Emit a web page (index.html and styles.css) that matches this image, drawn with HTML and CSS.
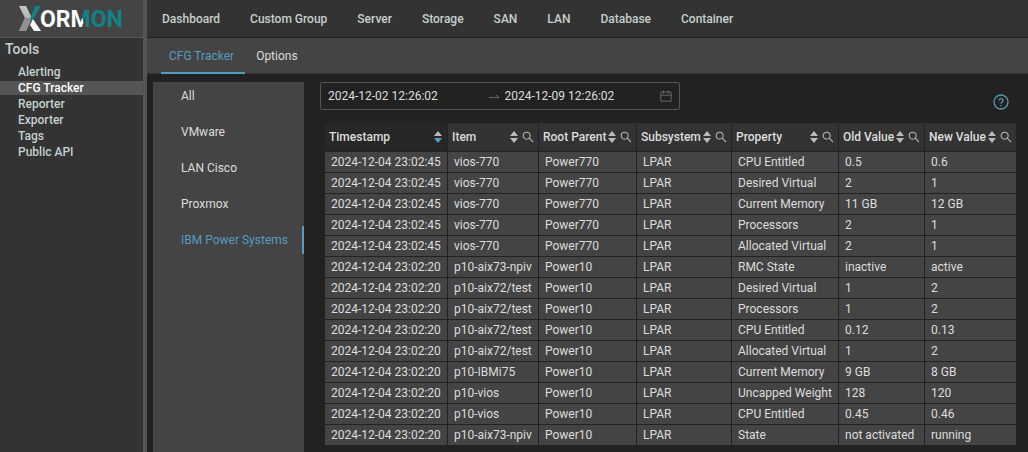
FILE: index.html
```html
<!DOCTYPE html>
<html lang="en">
<head>
<meta charset="utf-8">
<title>XORMON - CFG Tracker</title>
<link rel="stylesheet" href="styles.css">
</head>
<body>
<svg class="sprite" aria-hidden="true">
  <symbol id="sort" viewBox="0 0 8 12"><path class="sort-up" d="M4 0 8 5H0z"/><path class="sort-down" d="M4 12 0 7h8z"/></symbol>
  <symbol id="search" viewBox="64 64 896 896"><path d="M909.6 854.5L649.9 594.8C690.2 542.7 712 479 712 412c0-80.2-31.3-155.4-87.9-212.1-56.6-56.7-132-87.9-212.1-87.9s-155.5 31.3-212.1 87.9C143.2 256.5 112 331.8 112 412c0 80.1 31.3 155.5 87.9 212.1C256.5 680.8 331.8 712 412 712c67 0 130.6-21.8 182.7-62l259.7 259.6a8.2 8.2 0 0011.6 0l43.6-43.5a8.2 8.2 0 000-11.6zM570.4 570.4C528 612.7 471.8 636 412 636s-116-23.3-158.4-65.6C211.3 528 188 471.8 188 412s23.3-116.1 65.6-158.4C296 211.3 352.2 188 412 188s116.1 23.2 158.4 65.6S636 352.2 636 412s-23.3 116.1-65.6 158.4z"/></symbol>
</svg>
<div class="app">
  <aside class="sidebar">
    <a class="logo" href="#" aria-label="XORMON">
      <svg width="106" height="28" viewBox="0 0 106 28">
        <defs>
          <linearGradient id="word" gradientUnits="userSpaceOnUse" x1="60" y1="16" x2="68" y2="13">
            <stop offset=".58" stop-color="#fff"/><stop offset=".58" stop-color="#148087"/>
          </linearGradient>
          <linearGradient id="steel" x1="0" y1="0" x2="0" y2="1">
            <stop offset="0" stop-color="#c8c8c8"/><stop offset="1" stop-color="#999"/>
          </linearGradient>
        </defs>
        <path fill="url(#steel)" d="M1 1h7l6 12-6 13H1l6-13z"/>
        <path fill="#909090" d="M7 13h7L8 26H1z"/>
        <path fill="#148087" d="M17 1h6l-7 12-3 3-1-2z"/>
        <path fill="#fff" d="M15 14l8 12h-7l-4-6z"/>
        <text class="logo-word" x="22" y="22" fill="url(#word)">ORMON</text>
      </svg>
    </a>
    <nav class="tools">
      <h2 class="tools-title">Tools</h2>
      <a href="#">Alerting</a>
      <a href="#" class="current">CFG Tracker</a>
      <a href="#">Reporter</a>
      <a href="#">Exporter</a>
      <a href="#">Tags</a>
      <a href="#">Public API</a>
    </nav>
  </aside>
  <div class="page">
    <nav class="topnav">
      <a href="#">Dashboard</a><a href="#">Custom Group</a><a href="#">Server</a><a href="#">Storage</a><a href="#">SAN</a><a href="#">LAN</a><a href="#">Database</a><a href="#">Container</a>
    </nav>
    <div class="tabs" role="tablist">
      <button class="tab active" role="tab" aria-selected="true">CFG Tracker</button>
      <button class="tab" role="tab" aria-selected="false">Options</button>
    </div>
    <div class="body">
      <nav class="platforms">
        <a href="#">All</a>
        <a href="#">VMware</a>
        <a href="#">LAN Cisco</a>
        <a href="#">Proxmox</a>
        <a href="#" class="selected">IBM Power Systems</a>
      </nav>
      <main class="content">
        <div class="toolbar">
          <div class="range">
            <input type="text" aria-label="Start date" value="2024-12-02 12:26:02">
            <svg class="arrow" width="12" height="12" viewBox="0 0 12 12"><path d="M1 7.500h10L8 5"/></svg>
            <input type="text" aria-label="End date" value="2024-12-09 12:26:02">
            <svg class="calendar" width="12" height="12" viewBox="0 0 12 12"><path d="M.8 2h10.400v9.200H.8zM.8 5.200h10.400M3.500.5v3M8.500.5v3"/></svg>
          </div>
          <button class="help" aria-label="Help">
            <svg width="16" height="16" viewBox="0 0 16 16"><circle cx="8" cy="8" r="7"/><path d="M6 6.600a2 2 0 1 1 3 1.700c-.7.4-1 .7-1 1.400M8 11v1.200"/></svg>
          </button>
        </div>
        <table class="changes">
          <colgroup><col class="c-time"><col class="c-item"><col class="c-parent"><col class="c-sub"><col class="c-prop"><col class="c-old"><col class="c-new"></colgroup>
          <thead><tr>
            <th class="sorted"><div class="head"><span>Timestamp</span><svg class="sort"><use href="#sort"/></svg></div></th>
            <th><div class="head"><span>Item</span><svg class="sort"><use href="#sort"/></svg><svg class="search"><use href="#search"/></svg></div></th>
            <th><div class="head"><span>Root Parent</span><svg class="sort"><use href="#sort"/></svg><svg class="search"><use href="#search"/></svg></div></th>
            <th><div class="head"><span>Subsystem</span><svg class="sort"><use href="#sort"/></svg><svg class="search"><use href="#search"/></svg></div></th>
            <th><div class="head"><span>Property</span><svg class="sort"><use href="#sort"/></svg><svg class="search"><use href="#search"/></svg></div></th>
            <th><div class="head"><span>Old Value</span><svg class="sort"><use href="#sort"/></svg><svg class="search"><use href="#search"/></svg></div></th>
            <th><div class="head"><span>New Value</span><svg class="sort"><use href="#sort"/></svg><svg class="search"><use href="#search"/></svg></div></th>
          </tr></thead>
          <tbody>
            <tr><td>2024-12-04 23:02:45</td><td>vios-770</td><td>Power770</td><td>LPAR</td><td>CPU Entitled</td><td>0.5</td><td>0.6</td></tr>
            <tr><td>2024-12-04 23:02:45</td><td>vios-770</td><td>Power770</td><td>LPAR</td><td>Desired Virtual</td><td>2</td><td>1</td></tr>
            <tr><td>2024-12-04 23:02:45</td><td>vios-770</td><td>Power770</td><td>LPAR</td><td>Current Memory</td><td>11 GB</td><td>12 GB</td></tr>
            <tr><td>2024-12-04 23:02:45</td><td>vios-770</td><td>Power770</td><td>LPAR</td><td>Processors</td><td>2</td><td>1</td></tr>
            <tr><td>2024-12-04 23:02:45</td><td>vios-770</td><td>Power770</td><td>LPAR</td><td>Allocated Virtual</td><td>2</td><td>1</td></tr>
            <tr><td>2024-12-04 23:02:20</td><td>p10-aix73-npiv</td><td>Power10</td><td>LPAR</td><td>RMC State</td><td>inactive</td><td>active</td></tr>
            <tr><td>2024-12-04 23:02:20</td><td>p10-aix72/test</td><td>Power10</td><td>LPAR</td><td>Desired Virtual</td><td>1</td><td>2</td></tr>
            <tr><td>2024-12-04 23:02:20</td><td>p10-aix72/test</td><td>Power10</td><td>LPAR</td><td>Processors</td><td>1</td><td>2</td></tr>
            <tr><td>2024-12-04 23:02:20</td><td>p10-aix72/test</td><td>Power10</td><td>LPAR</td><td>CPU Entitled</td><td>0.12</td><td>0.13</td></tr>
            <tr><td>2024-12-04 23:02:20</td><td>p10-aix72/test</td><td>Power10</td><td>LPAR</td><td>Allocated Virtual</td><td>1</td><td>2</td></tr>
            <tr><td>2024-12-04 23:02:20</td><td>p10-IBMi75</td><td>Power10</td><td>LPAR</td><td>Current Memory</td><td>9 GB</td><td>8 GB</td></tr>
            <tr><td>2024-12-04 23:02:20</td><td>p10-vios</td><td>Power10</td><td>LPAR</td><td>Uncapped Weight</td><td>128</td><td>120</td></tr>
            <tr><td>2024-12-04 23:02:20</td><td>p10-vios</td><td>Power10</td><td>LPAR</td><td>CPU Entitled</td><td>0.45</td><td>0.46</td></tr>
            <tr><td>2024-12-04 23:02:20</td><td>p10-aix73-npiv</td><td>Power10</td><td>LPAR</td><td>State</td><td>not activated</td><td>running</td></tr>
          </tbody>
        </table>
      </main>
    </div>
  </div>
</div>
</body>
</html>
```

FILE: styles.css
```css
* { box-sizing: border-box; }
body {
  margin: 0;
  background: #222;
  color: #ddd;
  font: 12px/20px Roboto, "Liberation Sans", sans-serif;
}
a { color: inherit; text-decoration: none; }
button, input { font: inherit; color: inherit; background: none; border: 0; padding: 0; }
svg { display: block; flex: none; }
.sprite { position: absolute; width: 0; height: 0; }

.app { display: flex; min-height: 100vh; }
.sidebar { flex: 0 0 147px; background: #333; border-right: 4px solid #555; color: #c5d0d0; font-weight: 500; }
.logo { display: flex; align-items: center; height: 38px; padding: 0 18px; background: #444; border-bottom: 1px solid #555; }
.logo-word { font: 700 23px Roboto, sans-serif; }
.tools { display: flex; flex-direction: column; }
.tools-title { margin: 0 0 4px; padding: 1px 5px; font-size: 14px; line-height: 20px; font-weight: 500; }
.tools a { padding-left: 18px; line-height: 16px; }
.tools .current { background: #555; color: #fff; line-height: 14px; margin: 1px 0; }

.page { flex: 1; min-width: 0; display: flex; flex-direction: column; }
.topnav { display: flex; gap: 30px; height: 38px; padding: 0 15px; line-height: 38px; background: #333; border-bottom: 1px solid #222; color: #c5d0cc; font-weight: 500; }
.tabs { display: flex; gap: 3px; height: 36px; padding: 0 14px; background: #444; border-bottom: 1px solid #333; }
.tab { height: 36px; padding: 2px 11px 0 8px; border-bottom: 2px solid transparent; cursor: pointer; }
.tab.active { color: #549cc0; border-color: #549cc0; }

.body { flex: 1; display: flex; gap: 16px; padding: 8px 12px 0 6px; }
.platforms { flex: 0 0 151px; display: flex; flex-direction: column; gap: 8px; background: #444; }
.platforms a { padding-left: 28px; line-height: 28px; border-right: 2px solid transparent; }
.platforms .selected { color: #549cc0; border-color: #549cc0; }

.content { flex: 1; min-width: 0; padding-bottom: 6px; }
.toolbar { display: flex; justify-content: space-between; align-items: flex-start; }
.range { display: flex; align-items: center; width: 360px; height: 28px; padding: 0 7px; border: 1px solid #555; border-radius: 2px; }
.range input { flex: 1; min-width: 0; }
.range path { fill: none; stroke: #666; }
.range .arrow { margin: 0 5px 0 4px; }
.help { margin: 12px 7px 0 0; cursor: pointer; }
.help svg { fill: none; stroke: #5797b0; stroke-width: 1.3; }

.changes { width: calc(100% - 5px); margin: 13px 0 0 5px; border-collapse: separate; border-spacing: 0; table-layout: fixed; }
.c-time { width: 123px; }
.c-item { width: 91px; }
.c-parent { width: 98px; }
.c-sub { width: 95px; }
.c-prop { width: 107px; }
.c-old { width: 86px; }
.c-new { width: 92px; }
.changes th, .changes td { text-align: left; white-space: nowrap; border: solid #222; border-width: 0 1px 1px 0; }
.changes th { height: 29px; padding: 0 4px; background: #333; font-weight: 500; }
.changes th.sorted { background: #272727; padding-right: 5px; }
.changes th:first-child { border-top-left-radius: 2px; }
.changes th:last-child { border-top-right-radius: 2px; }
.changes td { padding: 0 0 0 6px; background: #444; }
.head { display: flex; align-items: center; gap: 4px; }
.head span { flex: 1; min-width: 0; margin-right: -4px; }
.sort { width: 8px; height: 12px; fill: #bbb; }
.search { width: 12px; height: 12px; fill: #bbb; }
.sort-down { fill: var(--down, #bbb); }
.sorted { --down: #549cc0; }
```
